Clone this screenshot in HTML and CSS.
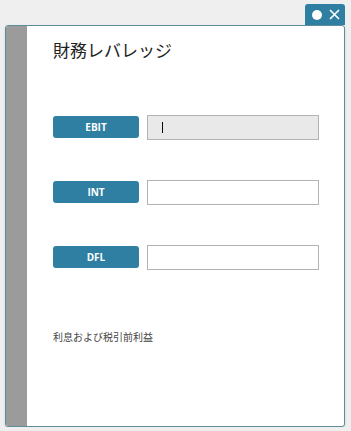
FILE: index.html
```html
<!DOCTYPE html>
<html lang="ja">
<head>
  <meta charset="UTF-8">
  <title>財務レバレッジ</title>
  <link rel="stylesheet" href="styles.css">
</head>
<body>
  <div class="window">
    <div class="tab">
      <span class="dot"></span>
      <svg class="close" width="11" height="11" viewBox="0 0 11 11">
        <path d="M1 1 L10 10 M10 1 L1 10" stroke="#fff" stroke-width="1.6"/>
      </svg>
    </div>
    <div class="frame">
      <div class="side"></div>
      <div class="content">
        <h1>財務レバレッジ</h1>
        <div class="rows">
          <div class="row">
            <button class="label">EBIT</button>
            <div class="field active"><span class="caret"></span></div>
          </div>
          <div class="row">
            <button class="label">INT</button>
            <input class="field" type="text">
          </div>
          <div class="row">
            <button class="label">DFL</button>
            <input class="field" type="text">
          </div>
        </div>
        <p class="note">利息および税引前利益</p>
      </div>
    </div>
  </div>
</body>
</html>
```

FILE: styles.css
```css
body {
  margin: 0;
  padding: 0;
  background-color: #efefef;
  font-family: "Open Sans", "Noto Sans CJK JP", sans-serif;
}
.window {
  padding: 4px 6px 0 5px;
}
.tab {
  margin-left: auto;
  width: 40px;
  height: 21px;
  background-color: #2e7fa2;
  border-radius: 3px 3px 0 0;
  display: flex;
  align-items: center;
  justify-content: space-between;
  padding: 0 5px 0 7px;
  box-sizing: border-box;
}
.dot {
  width: 10px;
  height: 10px;
  border-radius: 50%;
  background-color: #fff;
}
.frame {
  display: flex;
  height: 402px;
  border: 1px solid #5d8c9c;
  border-radius: 3px;
  background-color: #fff;
  overflow: hidden;
  box-sizing: border-box;
  box-shadow: 0 1px 2px rgba(0, 0, 0, 0.15);
}
.side {
  width: 21px;
  flex-shrink: 0;
  background-color: #9b9b9b;
}
.content {
  flex: 1;
  min-width: 0;
  padding: 14px 0 0 26px;
}
h1 {
  margin: 0;
  font-size: 17px;
  font-weight: normal;
  color: #222;
  line-height: 22px;
}
.rows {
  margin-top: 53px;
}
.row {
  display: flex;
  align-items: center;
  height: 24px;
  margin-bottom: 41px;
}
.label {
  width: 86px;
  height: 22px;
  margin-right: 8px;
  border: none;
  border-radius: 3px;
  background-color: #2e7fa2;
  color: #fff;
  font-family: "Open Sans", sans-serif;
  font-size: 10px;
  font-weight: bold;
  padding: 0;
}
.field {
  width: 172px;
  height: 25px;
  box-sizing: border-box;
  border: 1px solid #b3b3b3;
  background-color: #fff;
  font-size: 12px;
  padding: 0 14px;
  color: #000;
}
.field.active {
  background-color: #e9e9e9;
  display: flex;
  align-items: center;
}
.caret {
  width: 1px;
  height: 11px;
  background-color: #000;
}
.note {
  margin: 60px 0 0 0;
  font-size: 10px;
  color: #444;
}
```
